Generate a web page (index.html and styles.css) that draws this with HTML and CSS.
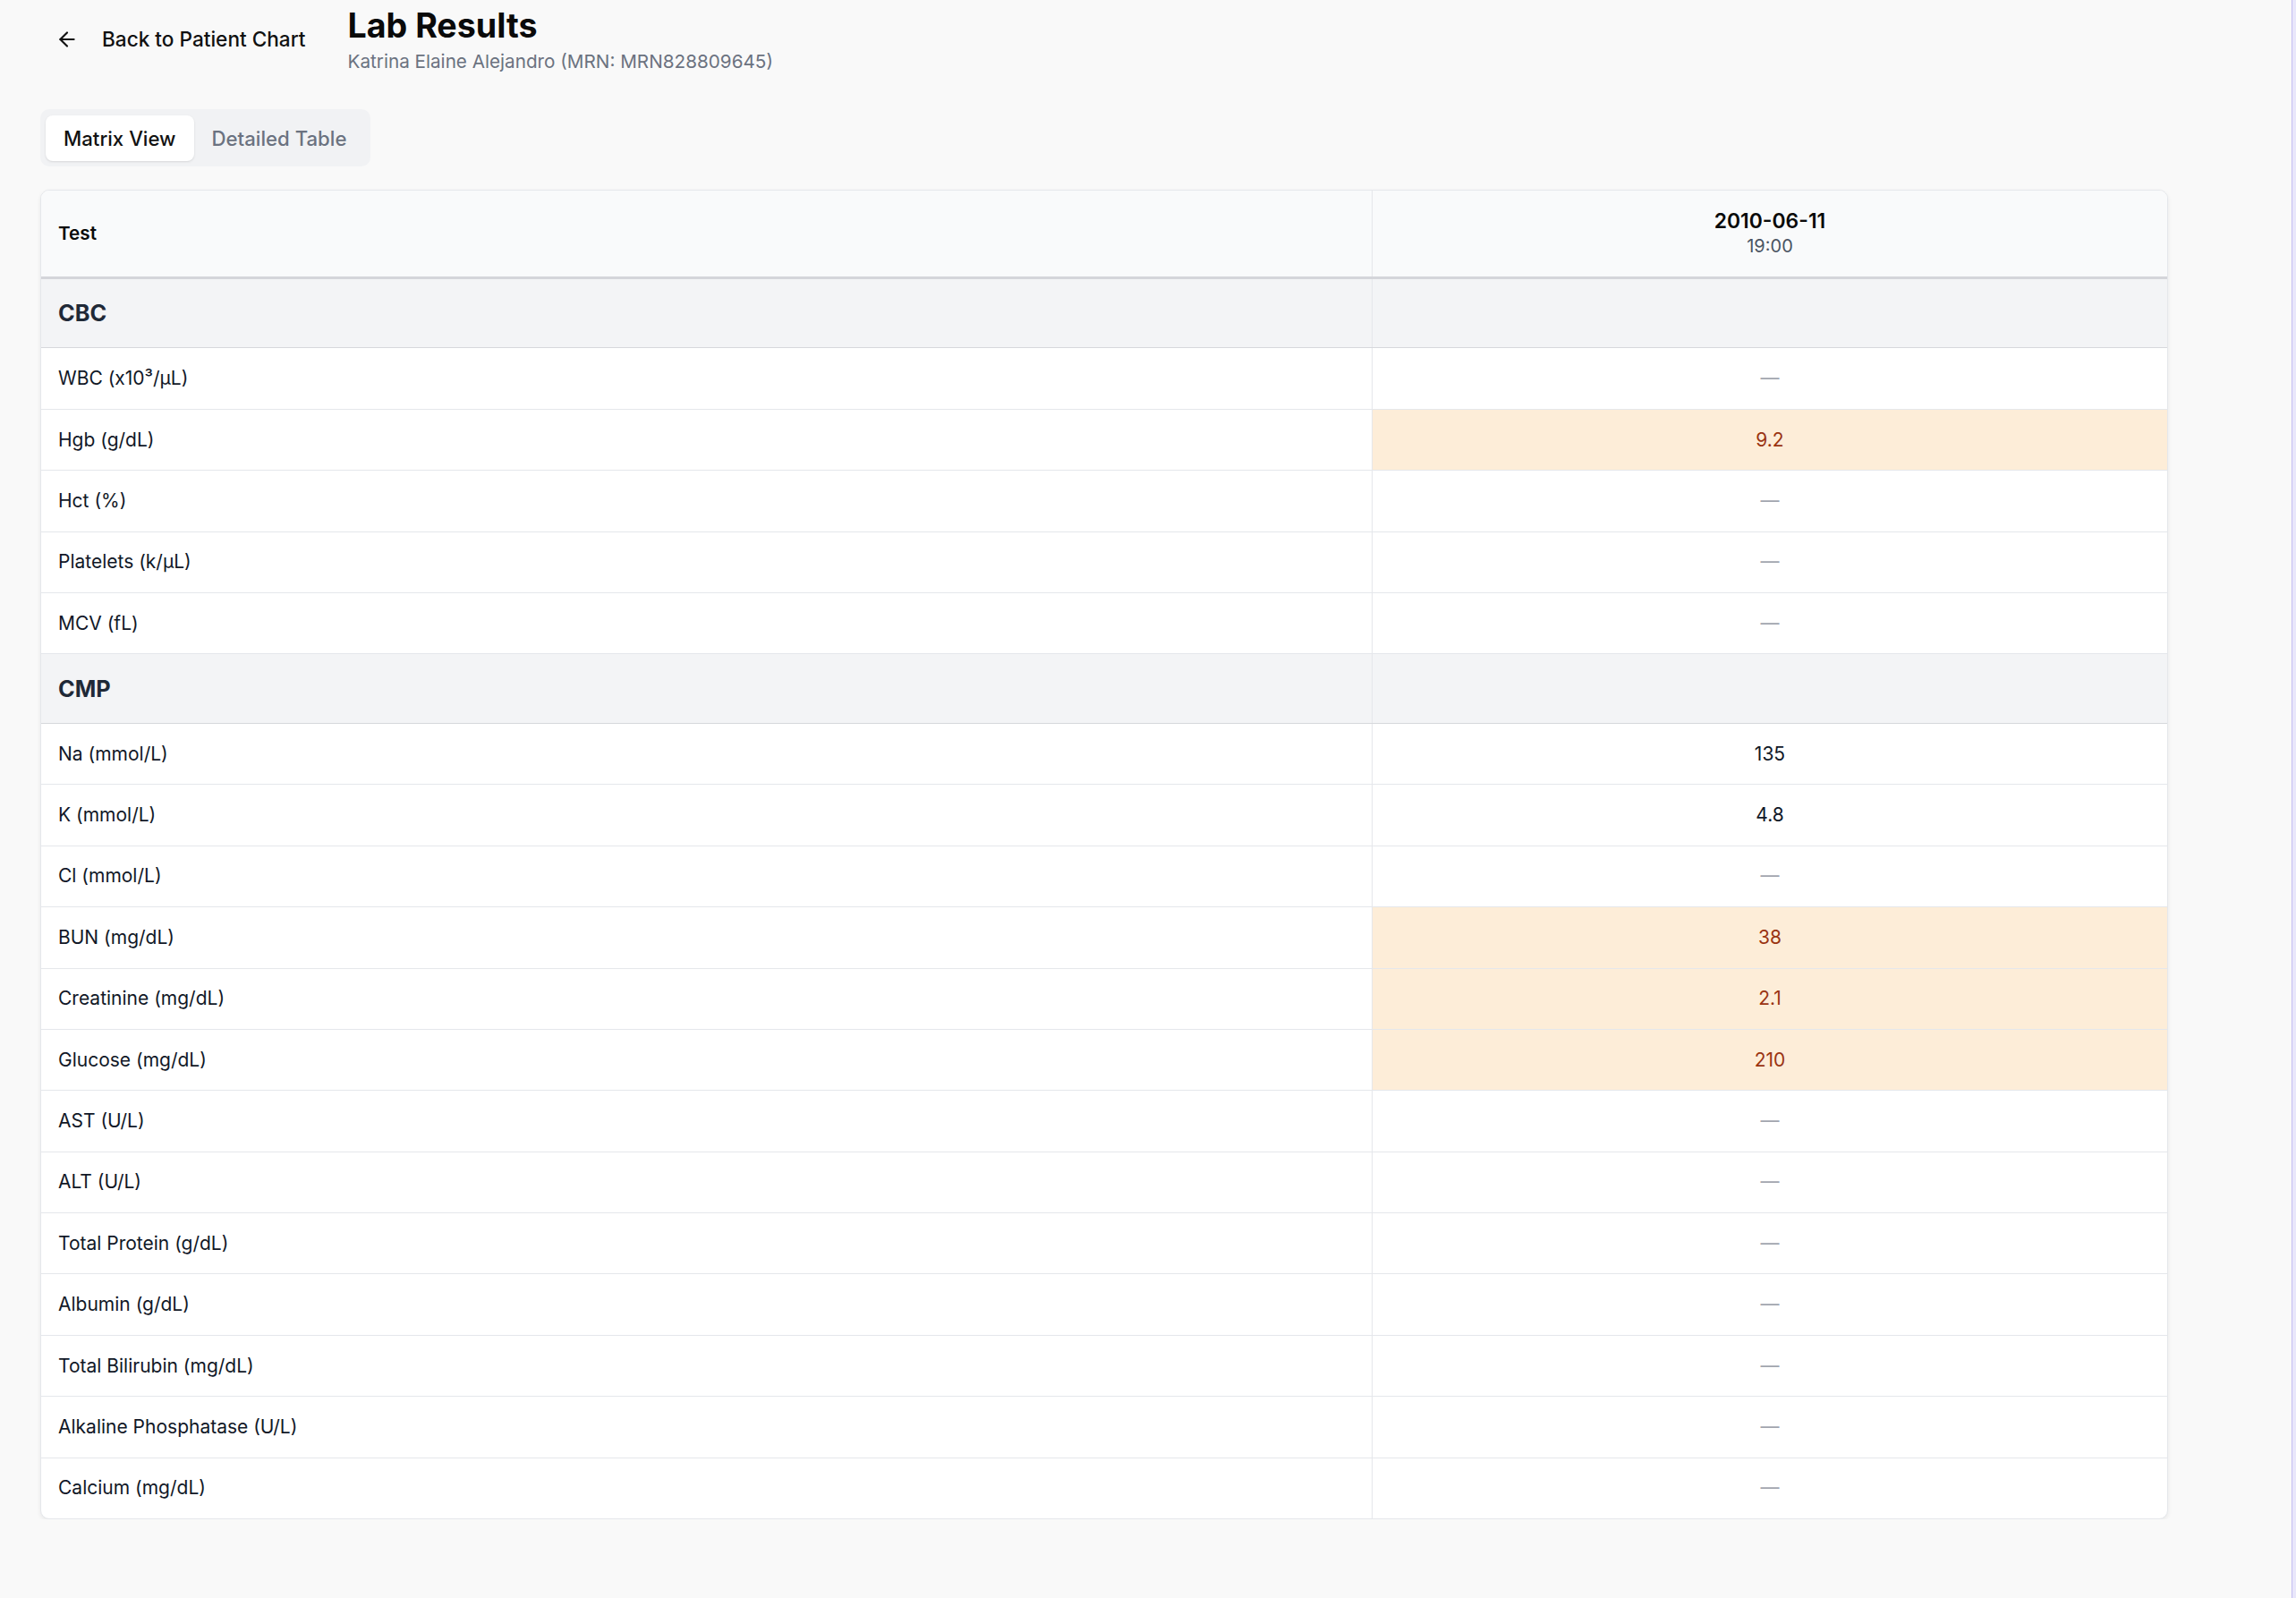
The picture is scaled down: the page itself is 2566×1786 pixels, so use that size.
FILE: index.html
```html
<!DOCTYPE html>
<html lang="en">
<head>
<meta charset="utf-8">
<title>Lab Results</title>
<link rel="stylesheet" href="styles.css">
</head>
<body>
<div class="edge"></div>
<div class="page">
  <header class="top">
    <button class="back" type="button">
      <svg class="back-icon" viewBox="0 0 24 24" fill="none" stroke="currentColor" stroke-width="2" stroke-linecap="round" stroke-linejoin="round"><path d="m12 19-7-7 7-7"/><path d="M19 12H5"/></svg>
      <span>Back to Patient Chart</span>
    </button>
    <div class="titles">
      <h1 class="title">Lab Results</h1>
      <p class="subtitle">Katrina Elaine Alejandro (MRN: MRN828809645)</p>
    </div>
  </header>

  <div class="tabs">
    <button class="tab tab-active" type="button">Matrix View</button>
    <button class="tab" type="button">Detailed Table</button>
  </div>

  <div class="card">
    <div class="row row-head">
      <div class="cell cell-label">Test</div>
      <div class="cell cell-value">
        <div class="date">2010-06-11</div>
        <div class="time">19:00</div>
      </div>
    </div>

    <div class="row row-section">
      <div class="cell cell-label">CBC</div>
      <div class="cell cell-value"></div>
    </div>
    <div class="row">
      <div class="cell cell-label">WBC (x10³/μL)</div>
      <div class="cell cell-value"><span class="dash">—</span></div>
    </div>
    <div class="row">
      <div class="cell cell-label">Hgb (g/dL)</div>
      <div class="cell cell-value cell-flag">9.2</div>
    </div>
    <div class="row">
      <div class="cell cell-label">Hct (%)</div>
      <div class="cell cell-value"><span class="dash">—</span></div>
    </div>
    <div class="row">
      <div class="cell cell-label">Platelets (k/μL)</div>
      <div class="cell cell-value"><span class="dash">—</span></div>
    </div>
    <div class="row">
      <div class="cell cell-label">MCV (fL)</div>
      <div class="cell cell-value"><span class="dash">—</span></div>
    </div>

    <div class="row row-section">
      <div class="cell cell-label">CMP</div>
      <div class="cell cell-value"></div>
    </div>
    <div class="row">
      <div class="cell cell-label">Na (mmol/L)</div>
      <div class="cell cell-value">135</div>
    </div>
    <div class="row">
      <div class="cell cell-label">K (mmol/L)</div>
      <div class="cell cell-value">4.8</div>
    </div>
    <div class="row">
      <div class="cell cell-label">Cl (mmol/L)</div>
      <div class="cell cell-value"><span class="dash">—</span></div>
    </div>
    <div class="row">
      <div class="cell cell-label">BUN (mg/dL)</div>
      <div class="cell cell-value cell-flag">38</div>
    </div>
    <div class="row">
      <div class="cell cell-label">Creatinine (mg/dL)</div>
      <div class="cell cell-value cell-flag">2.1</div>
    </div>
    <div class="row">
      <div class="cell cell-label">Glucose (mg/dL)</div>
      <div class="cell cell-value cell-flag">210</div>
    </div>
    <div class="row">
      <div class="cell cell-label">AST (U/L)</div>
      <div class="cell cell-value"><span class="dash">—</span></div>
    </div>
    <div class="row">
      <div class="cell cell-label">ALT (U/L)</div>
      <div class="cell cell-value"><span class="dash">—</span></div>
    </div>
    <div class="row">
      <div class="cell cell-label">Total Protein (g/dL)</div>
      <div class="cell cell-value"><span class="dash">—</span></div>
    </div>
    <div class="row">
      <div class="cell cell-label">Albumin (g/dL)</div>
      <div class="cell cell-value"><span class="dash">—</span></div>
    </div>
    <div class="row">
      <div class="cell cell-label">Total Bilirubin (mg/dL)</div>
      <div class="cell cell-value"><span class="dash">—</span></div>
    </div>
    <div class="row">
      <div class="cell cell-label">Alkaline Phosphatase (U/L)</div>
      <div class="cell cell-value"><span class="dash">—</span></div>
    </div>
    <div class="row">
      <div class="cell cell-label">Calcium (mg/dL)</div>
      <div class="cell cell-value"><span class="dash">—</span></div>
    </div>
  </div>
</div>
</body>
</html>
```

FILE: styles.css
```css
* { box-sizing: border-box; }

html, body {
  margin: 0;
  padding: 0;
  background: #f9f9f9;
  font-family: Inter, "Noto Sans", "Liberation Sans", sans-serif;
  color: #111111;
}

.edge {
  position: fixed;
  top: 0;
  right: 0;
  width: 5px;
  height: 100%;
  background: linear-gradient(to right, #c4bff2 0 1px, #e9e7fb 1px);
}

.page {
  padding: 5.6px 0 0 45px;
  width: 2423px;
}

.top {
  display: flex;
  align-items: center;
  gap: 30px;
}

.back {
  display: flex;
  align-items: center;
  gap: 26px;
  padding: 0 17px;
  border: 0;
  background: transparent;
  font-family: inherit;
  font-size: 22.6px;
  font-weight: 500;
  line-height: 32px;
  color: #111111;
}

.back-icon {
  width: 26px;
  height: 26px;
  flex: none;
}

.titles { display: flex; flex-direction: column; gap: 3.4px; }

.title {
  margin: 0;
  font-size: 37.6px;
  line-height: 46px;
  font-weight: 700;
  color: #0a0a0a;
}

.subtitle {
  margin: 0;
  font-size: 20.7px;
  line-height: 28px;
  color: #6b7280;
}

.tabs {
  display: inline-flex;
  margin-top: 39px;
  padding: 7px 7px 6px 6px;
  background: #f1f2f4;
  border-radius: 10px;
}

.tab {
  padding: 10px 20px;
  border: 0;
  border-radius: 8px;
  background: transparent;
  font-family: inherit;
  font-size: 22.2px;
  font-weight: 500;
  line-height: 31px;
  color: #6b7280;
}

.tab-active {
  background: #ffffff;
  color: #111111;
  box-shadow: 0 1px 3px rgba(0, 0, 0, 0.08), 0 1px 2px rgba(0, 0, 0, 0.04);
}

.card {
  margin-top: 26px;
  width: 2378px;
  background: #ffffff;
  border: 1px solid #e5e7eb;
  border-radius: 10px;
  overflow: hidden;
  box-shadow: 0 2px 5px rgba(0, 0, 0, 0.07);
}

.row {
  display: grid;
  grid-template-columns: 1487px 1fr;
  height: 68.4px;
  border-bottom: 1px solid #e5e7eb;
}

.row:last-child { border-bottom: 0; height: 67.4px; }

.cell {
  display: flex;
  align-items: center;
  font-size: 21px;
  line-height: 30px;
  color: #111827;
}

.cell-label { padding-left: 19px; }

.cell-value {
  justify-content: center;
  border-left: 1px solid #e5e7eb;
}

.cell-flag {
  background: #fdedd8;
  color: #9a3412;
}

.dash { color: #a1a5ae; }

.row-head {
  height: 99px;
  background: #f9fafb;
  border-bottom: 3px solid #d4d5da;
}

.row-head .cell-label {
  font-size: 20.7px;
  font-weight: 600;
  color: #0a0a0a;
}

.row-head .cell-value {
  flex-direction: column;
  justify-content: center;
}

.date {
  font-size: 22.9px;
  line-height: 28px;
  font-weight: 600;
  color: #0a0a0a;
}

.time {
  font-size: 20px;
  line-height: 28px;
  color: #4b5563;
}

.row-section {
  height: 77.5px;
  background: #f3f4f6;
  border-bottom: 1px solid #d6d8dc;
}

.row-section .cell-label {
  font-size: 25.3px;
  font-weight: 700;
  color: #1f2937;
}
```
